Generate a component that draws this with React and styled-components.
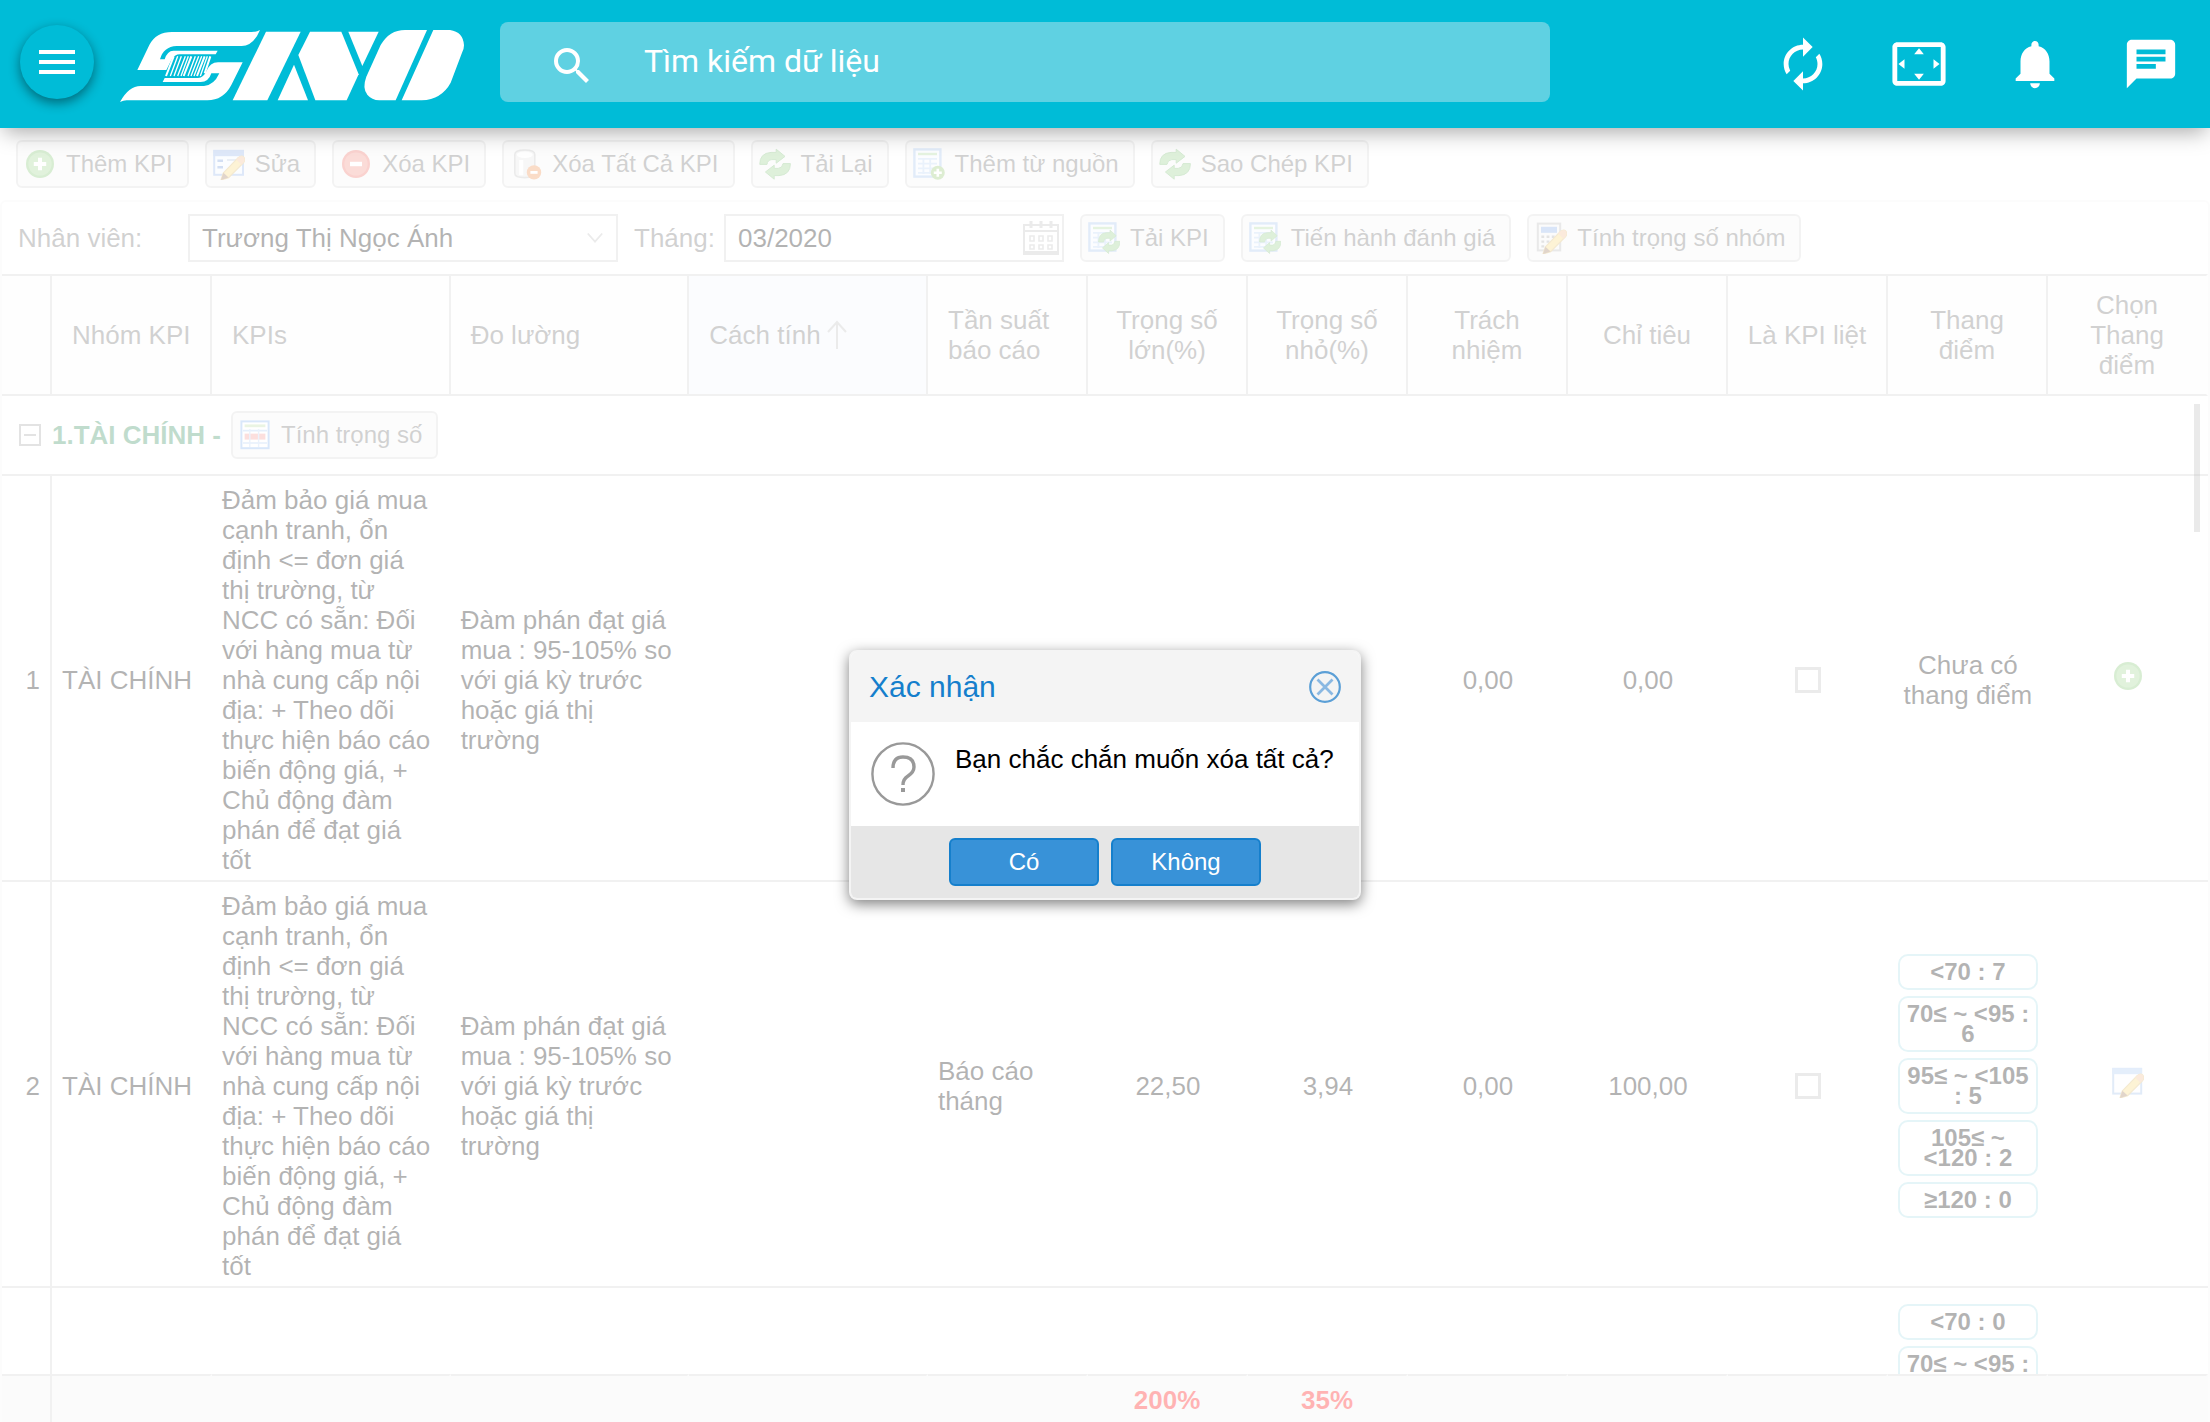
import React from "react";
import styled, { createGlobalStyle, css } from "styled-components";
import {
  MdAutorenew,
  MdChat,
  MdMenu,
  MdNotifications,
  MdSearch,
  MdSettingsOverscan,
} from "react-icons/md";

const GlobalStyle = createGlobalStyle`
  * { box-sizing: border-box; }
  body {
    margin: 0;
    background: #fff;
    color: #000;
    font-family: "Liberation Sans", Arial, sans-serif;
    font-size: 26px;
    line-height: 30px;
  }
  button, input, select { font-family: inherit; margin: 0; }
`;

const line = "#d0d0d0";

const Page = styled.div`
  position: relative;
  display: flex;
  flex-direction: column;
  height: 100vh;
  overflow: hidden;
`;

/* ---------- top bar ---------- */

const TopBar = styled.header`
  position: relative;
  z-index: 2;
  flex: none;
  display: flex;
  align-items: center;
  height: 128px;
  padding: 0 30px 0 20px;
  background: #00bcd7;
  color: #fff;
  box-shadow: 0 8px 20px -4px rgba(0, 0, 0, 0.34);
`;

const IconButton = styled.button`
  display: flex;
  padding: 0;
  border: 0;
  background: none;
  color: inherit;
  svg { display: block; }
`;

const MenuButton = styled(IconButton)`
  align-items: center;
  justify-content: center;
  width: 74px;
  height: 74px;
  margin: 0 26px 4px 0;
  border-radius: 50%;
  background: #00bcd7;
  box-shadow: 0 4px 12px rgba(0, 0, 0, 0.45);
`;

const SearchBox = styled.div`
  display: flex;
  align-items: flex-end;
  gap: 48px;
  flex: 0 1 1050px;
  height: 80px;
  margin: 0 0 4px 36px;
  padding: 12px 48px;
  border-radius: 8px;
  background: #5fd1e2;
  svg { flex: none; }
`;

const SearchInput = styled.input`
  flex: 1;
  height: 56px;
  padding: 0 0 2px;
  border: 0;
  outline: 0;
  background: none;
  color: #fff;
  font: 32px Roboto, sans-serif;
  &::placeholder { color: #fff; opacity: 1; }
`;

const TopActions = styled.nav`
  display: flex;
  gap: 58px;
  margin-left: auto;
`;

/* ---------- toolbars ---------- */

const Workspace = styled.main`
  flex: 1;
  min-height: 0;
  display: flex;
  flex-direction: column;
`;

const Toolbar = styled.div`
  flex: none;
  display: flex;
  align-items: center;
  gap: 16px;
  padding: 12px 16px;
`;

const ToolButton = styled.button`
  display: inline-flex;
  align-items: center;
  gap: 10px;
  height: 48px;
  padding: 0 14px 0 6px;
  border: 2px solid #d8d8d8;
  border-radius: 6px;
  background: #f5f5f5;
  color: #666;
  font-size: 24px;
  white-space: nowrap;
  svg { display: block; flex: none; }
`;

const Panel = styled.section`
  flex: 1;
  min-height: 0;
  display: flex;
  flex-direction: column;
  border: 2px solid #f5f5f5;
  border-bottom: 0;
  border-radius: 6px 6px 0 0;
`;

const FieldLabel = styled.label`
  width: ${(p) => (p.$wide ? "154px" : "74px")};
  color: #666;
  white-space: nowrap;
`;

const Field = styled.div`
  position: relative;
  width: ${(p) => (p.$wide ? "430px" : "340px")};
  svg {
    position: absolute;
    top: 50%;
    right: ${(p) => (p.$wide ? "14px" : "4px")};
    transform: translateY(-50%);
    pointer-events: none;
  }
`;

const control = css`
  display: block;
  width: 100%;
  height: 48px;
  padding: 0 12px;
  border: 2px solid ${line};
  border-radius: 0;
  background: #fff;
  color: #000;
  font-size: 26px;
  appearance: none;
`;
const Select = styled.select`${control}`;
const TextInput = styled.input`${control}`;

/* ---------- grid ---------- */

const Grid = styled.table`
  width: 100%;
  border-spacing: 0;
  table-layout: fixed;
`;

const HeadCell = styled.th`
  height: 122px;
  padding: ${(p) => (p.$center ? "0 12px" : "0 0 0 20px")};
  border-top: 2px solid ${line};
  border-bottom: 2px solid ${line};
  border-right: 2px solid ${line};
  background: ${(p) => (p.$sorted ? "#f0f5fb" : "#fafafa")};
  color: #666;
  font-weight: 400;
  text-align: ${(p) => (p.$center ? "center" : "left")};
  &:last-child { border-right-color: transparent; }
`;

const HeadLabel = styled.span`
  display: inline-flex;
  align-items: center;
  gap: 6px;
`;

const GridBody = styled.div`
  position: relative;
  flex: 1;
  min-height: 0;
  overflow: hidden;
`;

const Cell = styled.td`
  padding: 9px 10px 5px;
  border-bottom: 2px solid ${line};
  text-align: ${(p) => p.$align || "left"};
  vertical-align: middle;
  white-space: pre-line;
`;

const NumberCell = styled(Cell)`
  padding-left: 0;
  border-right: 2px solid ${line};
  text-align: right;
`;

const IconCell = styled(Cell)`
  padding: 5px 10px 9px;
  svg { display: block; margin: 0 auto; }
`;

const PartialCell = styled(Cell)`
  height: 298px;
  padding-top: 16px;
  vertical-align: top;
`;

const GroupCell = styled.td`
  height: 80px;
  padding: 0 16px;
  border-bottom: 2px solid ${line};
`;

const GroupBar = styled.div`
  display: flex;
  align-items: center;
  gap: 10px;
`;

const GroupName = styled.strong`
  color: #2e8b57;
`;

const Tick = styled.input`
  appearance: none;
  display: block;
  width: 26px;
  height: 26px;
  margin: 0 auto;
  border: 3px solid #bbb;
  background: #fff;
`;

const Badges = styled.ul`
  display: flex;
  flex-direction: column;
  gap: 6px;
  margin: 0;
  padding: 0;
  list-style: none;
`;

const Badge = styled.li`
  padding: 6px 4px;
  border: 2px solid #a8dde6;
  border-radius: 10px;
  font-size: 24px;
  font-weight: 700;
  line-height: 20px;
  text-align: center;
`;

const ScrollThumb = styled.div`
  position: absolute;
  top: 8px;
  right: 8px;
  width: 6px;
  height: 128px;
  background: rgba(0, 0, 0, 0.28);
`;

const SummaryCell = styled.td`
  height: 48px;
  padding: 2px 0 0;
  border-top: 2px solid ${line};
  border-right: 2px solid ${(p) => (p.$first ? line : "transparent")};
  background: #f2f2f2;
  color: #f00;
  font-weight: 700;
  text-align: center;
`;

/* ---------- dialog ---------- */

const Mask = styled.div`
  position: absolute;
  inset: 128px 0 0;
  z-index: 1;
  display: flex;
  align-items: center;
  justify-content: center;
  background: rgba(255, 255, 255, 0.7);
`;

const Dialog = styled.section`
  width: 512px;
  border: 2px solid #f4f4f4;
  border-radius: 8px;
  background: #fff;
  box-shadow: 0 4px 14px rgba(0, 0, 0, 0.5);
  overflow: hidden;
`;

const DialogHead = styled.header`
  display: flex;
  align-items: center;
  justify-content: space-between;
  height: 70px;
  padding: 0 18px;
  background: #f4f4f4;
  color: #157fcc;
`;

const DialogTitle = styled.h2`
  margin: 0;
  font-size: 30px;
  font-weight: 400;
`;

const DialogBody = styled.div`
  display: flex;
  gap: 20px;
  padding: 20px;
  svg { display: block; flex: none; }
`;

const Message = styled.p`
  margin: 0;
  line-height: 34px;
  white-space: nowrap;
`;

const DialogFoot = styled.footer`
  display: flex;
  justify-content: center;
  gap: 12px;
  padding: 12px;
  background: #e6e6e6;
`;

const Choice = styled.button`
  width: 150px;
  height: 48px;
  border: 2px solid #157fcc;
  border-radius: 6px;
  background: #3892d8;
  color: #fff;
  font-size: 24px;
`;

/* ---------- drawings ---------- */

const Logo = () => (
  <svg width="344" height="76" viewBox="30 18 1032 228" fill="#fff" role="img" aria-label="SINO">
    <path d="M82 150 118 75Q138 36 186 36H425Q440 36 450 30 430 78 395 78H200Q160 80 150 118H164Q172 92 190 92H323L317 103H210Q193 103 184 120L169 150Z" />
    <path d="M30 246Q56 198 92 198H282Q312 196 328 160H304Q296 186 272 186H158L164 174H264Q281 173 289 154 300 127 324 127H398L364 195Q340 241 292 241H50Q40 241 30 246Z" />
    <g stroke="#fff" fill="none">
      <path strokeWidth="6" d="M191 109 168 168M244 109 221 168M284 109 261 168M301 109 284 160" />
      <path strokeWidth="4" d="M203 109 181 168M214 109 192 168M226 109 203 168M235 109 213 168M256 109 234 168M266 109 243 168M275 109 252 168M292 109 271 168" />
    </g>
    <path d="M468 35H572L472 241H368Z" />
    <path d="M552 134 594 241H503Z" />
    <path d="M600 35H694L746 163 710 241H616L565 105Z" />
    <path d="M715 35H806L757 138Z" />
    <path d="M951 30H885Q838 30 812 75L769 170Q756 204 772 224 785 240 808 241H857Z" />
    <path d="M970 30H1020Q1060 36 1062 76 1062 88 1056 98L1022 188Q995 238 935 241H875Z" />
  </svg>
);

const Svg = ({ size = 32, children }) => (
  <svg width={size} height={size} viewBox="0 0 16 16" fill="none" aria-hidden="true">
    {children}
  </svg>
);

const PencilShape = () => (
  <>
    <path d="M5.2 12.4 12.6 4.8Q14.3 3.4 15.4 4.6 16.4 6 15.2 7.4L7.8 14.8 4 16Z" fill="#f7d573" stroke="#d9b562" strokeWidth=".6" />
    <path d="M12.6 4.8Q14.3 3.4 15.4 4.6 16.4 6 15.2 7.4L14.2 8.4 11.6 5.8Z" fill="#f0b98a" />
    <path d="M5.2 12.4 7.8 14.8 4 16Z" fill="#9a7350" />
  </>
);

const ArrowsShape = () => (
  <g fill="#8fcc82" stroke="#74b86c" strokeWidth=".5">
    <path d="M.4 8.2Q.3 2.6 6 2.2H8.6V.6L13 4.2 8.6 7.6V5.8H6.4Q4.2 6 4 8.2Z" />
    <path d="M15.7 7.8Q15.7 13.4 10 13.8H7.6V15.6L3.2 12 7.6 8.6V10.2H9.6Q11.8 10 12 7.8Z" />
  </g>
);

const SheetShape = () => (
  <>
    <rect x=".7" y=".7" width="13" height="13.6" fill="#f4f9ff" stroke="#9dbfec" strokeWidth="1.2" />
    <path d="M2.500 3H12" stroke="#a9d698" strokeWidth="1.2" />
    <path d="M2.500 5.4H12M2.500 7.8H12M2.500 10.2H12M2.500 12.4H12M5.2 5V13M8.6 5V13" stroke="#b9d2f3" strokeWidth=".9" />
  </>
);

const AddIcon = ({ size }) => (
  <Svg size={size}>
    <circle cx="8" cy="8" r="7" fill="#7cc46c" />
    <circle cx="8" cy="8" r="5.8" fill="#9ad48b" />
    <path d="M8 4.9V11.1M4.9 8H11.1" stroke="#fff" strokeWidth="2" />
  </Svg>
);

const RemoveIcon = () => (
  <Svg>
    <circle cx="8" cy="8" r="7" fill="#ee6a5e" />
    <circle cx="8" cy="8" r="5.8" fill="#f28a7e" />
    <path d="M5 8H11" stroke="#fff" strokeWidth="2.2" />
  </Svg>
);

const FormEditIcon = () => (
  <Svg>
    <rect x=".6" y="1.4" width="14.4" height="12" fill="#f2f7ff" stroke="#8fb3ea" />
    <path d="M.2 2.6H15.4" stroke="#8fb3ea" strokeWidth="3" />
    <path d="M2.2 6.4H5M2.2 9.6H5" stroke="#6c93d6" strokeWidth="1.2" />
    <path d="M7 6H13V8" stroke="#b8c8e0" />
    <PencilShape />
  </Svg>
);

const WindowEditIcon = () => (
  <Svg>
    <rect x=".6" y="1.4" width="14" height="12.4" fill="#fafcff" stroke="#9cbce8" />
    <path d="M.2 2.6H15" stroke="#a4c5f2" strokeWidth="3" />
    <PencilShape />
  </Svg>
);

const DatabaseIcon = () => (
  <Svg>
    <path d="M2.4 3.2Q2.4 1 7.4 1T12.4 3.2V12.6Q12.4 14.8 7.4 14.8T2.4 12.6Z" fill="#e4e4e4" stroke="#bdbdbd" strokeWidth=".8" />
    <ellipse cx="7.4" cy="3.4" rx="4" ry="1.6" fill="#fff" />
    <path d="M5.6 6V13.6" stroke="#fff" strokeWidth="2" />
    <circle cx="12" cy="12.2" r="3.6" fill="#ee8a45" />
    <path d="M10.2 12.2H13.8" stroke="#fff" strokeWidth="1.4" />
  </Svg>
);

const ReloadIcon = () => (
  <Svg>
    <ArrowsShape />
  </Svg>
);

const SheetAddIcon = () => (
  <Svg>
    <SheetShape />
    <circle cx="12.4" cy="12.4" r="3.5" fill="#8ec46a" />
    <path d="M12.4 10.4V14.4M10.4 12.4H14.4" stroke="#fff" strokeWidth="1.3" />
  </Svg>
);

const SheetReloadIcon = () => (
  <Svg>
    <SheetShape />
    <g transform="translate(5 3.6) scale(.7 .78)">
      <ArrowsShape />
    </g>
  </Svg>
);

const CalculatorIcon = () => (
  <Svg>
    <rect x="1.4" y=".8" width="11.2" height="13.4" fill="#f0f0f0" stroke="#b5b5b5" />
    <rect x="3" y="2.4" width="8" height="3" fill="#7fa9e6" />
    <path d="M3.2 7.4H11M3.2 9.8H11M3.2 12.2H11" stroke="#a0a0a0" strokeWidth="1.2" strokeDasharray="1.4 1.2" />
    <PencilShape />
  </Svg>
);

const TableIcon = () => (
  <Svg>
    <rect x="1.2" y="1.2" width="13.6" height="13.4" fill="#fff" stroke="#7fb0ee" />
    <path d="M2.8 3.4H13.2" stroke="#b9dba0" strokeWidth="1.4" />
    <path d="M2 5.8H14M2 12H14" stroke="#a9c8f0" strokeWidth=".8" />
    <path d="M2.8 8.8H13.2" stroke="#f6958e" strokeWidth="3" />
    <path d="M5.4 5V14M9.8 5V14" stroke="#bcd3f3" strokeWidth=".7" />
  </Svg>
);

const Chevron = () => (
  <svg width="18" height="14" viewBox="0 0 20 14" fill="none" stroke="#bbb" strokeWidth="2" aria-hidden="true">
    <path d="M2 2 10 11 18 2" />
  </svg>
);

const CalendarIcon = () => (
  <svg width="38" height="38" viewBox="0 0 38 38" fill="none" stroke="#bdbdbd" strokeWidth="2" aria-hidden="true">
    <rect x="2" y="6" width="34" height="29" />
    <path d="M2 12H36" />
    <path d="M2 34H36" strokeWidth="4" />
    <path d="M9 2V9M19 2V9M29 2V9" strokeWidth="3" />
    <path d="M8 17H12V22H8ZM17 17H21V22H17ZM26 17H30V22H26ZM8 26H12V30H8ZM17 26H21V30H17ZM26 26H30V30H26Z" strokeWidth="1.6" />
  </svg>
);

const SortArrow = () => (
  <svg width="20" height="30" viewBox="0 0 20 30" fill="none" stroke="#bbb" strokeWidth="2" aria-hidden="true">
    <path d="M10 29V2M1 12 10 2 19 12" />
  </svg>
);

const CollapseIcon = () => (
  <svg width="24" height="24" viewBox="0 0 24 24" fill="none" stroke="#a0a0a0" strokeWidth="2" aria-hidden="true">
    <path d="M2 2H22V22H2ZM6 12H18" />
  </svg>
);

const CloseIcon = () => (
  <svg width="32" height="32" viewBox="0 0 32 32" fill="none" stroke="#5b9fd6" strokeWidth="2.2" aria-hidden="true">
    <circle cx="16" cy="16" r="14.8" />
    <path d="M8.500 8.500 23.500 23.500M23.500 8.500 8.500 23.500" stroke="#8ab8e2" strokeWidth="2.8" />
  </svg>
);

const QuestionIcon = () => (
  <svg width="64" height="64" viewBox="0 0 64 64" fill="none" stroke="#999" strokeWidth="2.4" aria-hidden="true">
    <circle cx="32" cy="32" r="30.6" />
    <path d="M22 26Q22 15 32 15 43 15 43 25 43 30 37 34 32 37 32 43" strokeWidth="3.4" />
    <path d="M30 48H34" strokeWidth="4" />
  </svg>
);

/* ---------- data ---------- */

const actions = [
  ["Thêm KPI", AddIcon],
  ["Sửa", FormEditIcon],
  ["Xóa KPI", RemoveIcon],
  ["Xóa Tất Cả KPI", DatabaseIcon],
  ["Tải Lại", ReloadIcon],
  ["Thêm từ nguồn", SheetAddIcon],
  ["Sao Chép KPI", ReloadIcon],
];

const filterActions = [
  ["Tải KPI", SheetReloadIcon],
  ["Tiến hành đánh giá", SheetReloadIcon],
  ["Tính trọng số nhóm", CalculatorIcon],
];

const columns = [
  { label: "", width: 50 },
  { label: "Nhóm KPI", width: 160 },
  { label: "KPIs" },
  { label: "Đo lường" },
  { label: "Cách tính", sorted: true },
  { label: "Tần suất báo cáo", width: 160 },
  { label: "Trọng số lớn(%)", width: 160, center: true },
  { label: "Trọng số nhỏ(%)", width: 160, center: true },
  { label: "Trách nhiệm", width: 160, center: true },
  { label: "Chỉ tiêu", width: 160, center: true },
  { label: "Là KPI liệt", width: 160, center: true },
  { label: "Thang điểm", width: 160, center: true },
  { label: "Chọn Thang điểm", width: 160, center: true },
];

const kpiText = `Đảm bảo giá mua cạnh tranh, ổn
định <= đơn giá
thị trường, từ
NCC có sẵn: Đối với hàng mua từ
nhà cung cấp nội địa: + Theo dõi
thực hiện báo cáo biến động giá, +
Chủ động đàm phán để đạt giá
tốt`;
const measureText = "Đàm phán đạt giá mua : 95-105% so với giá kỳ trước hoặc giá thị trường";

const rows = [
  { id: 1, target: "0,00" },
  {
    id: 2,
    period: "Báo cáo tháng",
    major: "22,50",
    minor: "3,94",
    target: "100,00",
    scale: ["<70 : 7", "70≤ ~ <95 : 6", "95≤ ~ <105 : 5", "105≤ ~ <120 : 2", "≥120 : 0"],
  },
];

const partialScale = ["<70 : 0", "70≤ ~ <95 : 6"];

const Columns = () => (
  <colgroup>
    {columns.map((c, i) => (
      <col key={i} width={c.width} />
    ))}
  </colgroup>
);

const Tools = ({ items }) =>
  items.map(([label, Icon]) => (
    <ToolButton key={label} type="button">
      <Icon />
      {label}
    </ToolButton>
  ));

const Scale = ({ items }) => (
  <Badges>
    {items.map((s) => (
      <Badge key={s}>{s}</Badge>
    ))}
  </Badges>
);

export default function App() {
  return (
    <Page>
      <GlobalStyle />
      <TopBar>
        <MenuButton type="button" aria-label="Menu">
          <MdMenu size={48} />
        </MenuButton>
        <Logo />
        <SearchBox>
          <MdSearch size={48} />
          <SearchInput type="search" placeholder="Tìm kiếm dữ liệu" aria-label="Tìm kiếm dữ liệu" />
        </SearchBox>
        <TopActions>
          <IconButton type="button" aria-label="Làm mới"><MdAutorenew size={58} /></IconButton>
          <IconButton type="button" aria-label="Toàn màn hình"><MdSettingsOverscan size={58} /></IconButton>
          <IconButton type="button" aria-label="Thông báo"><MdNotifications size={58} /></IconButton>
          <IconButton type="button" aria-label="Tin nhắn"><MdChat size={58} /></IconButton>
        </TopActions>
      </TopBar>

      <Workspace>
        <Toolbar>
          <Tools items={actions} />
        </Toolbar>
        <Panel>
          <Toolbar>
            <FieldLabel htmlFor="employee" $wide>Nhân viên:</FieldLabel>
            <Field $wide>
              <Select id="employee" defaultValue="a">
                <option value="a">Trương Thị Ngọc Ánh</option>
              </Select>
              <Chevron />
            </Field>
            <FieldLabel htmlFor="month">Tháng:</FieldLabel>
            <Field>
              <TextInput id="month" type="text" defaultValue="03/2020" />
              <CalendarIcon />
            </Field>
            <Tools items={filterActions} />
          </Toolbar>

          <Grid>
            <Columns />
            <thead>
              <tr>
                {columns.map((c, i) => (
                  <HeadCell key={i} $center={c.center} $sorted={c.sorted}>
                    {c.sorted ? (
                      <HeadLabel>
                        {c.label}
                        <SortArrow />
                      </HeadLabel>
                    ) : (
                      c.label
                    )}
                  </HeadCell>
                ))}
              </tr>
            </thead>
          </Grid>

          <GridBody>
            <Grid>
              <Columns />
              <tbody>
                <tr>
                  <GroupCell colSpan={13}>
                    <GroupBar>
                      <IconButton type="button" aria-label="Thu gọn"><CollapseIcon /></IconButton>
                      <GroupName>1.TÀI CHÍNH -</GroupName>
                      <ToolButton type="button">
                        <TableIcon />
                        Tính trọng số
                      </ToolButton>
                    </GroupBar>
                  </GroupCell>
                </tr>
                {rows.map((r) => (
                  <tr key={r.id}>
                    <NumberCell>{r.id}</NumberCell>
                    <Cell>TÀI CHÍNH</Cell>
                    <Cell>{kpiText}</Cell>
                    <Cell>{measureText}</Cell>
                    <Cell />
                    <Cell>{r.period}</Cell>
                    <Cell $align="center">{r.major}</Cell>
                    <Cell $align="center">{r.minor}</Cell>
                    <Cell $align="center">0,00</Cell>
                    <Cell $align="center">{r.target}</Cell>
                    <Cell>
                      <Tick type="checkbox" aria-label={`Là KPI liệt ${r.id}`} />
                    </Cell>
                    <Cell $align="center">{r.scale ? <Scale items={r.scale} /> : "Chưa có thang điểm"}</Cell>
                    <IconCell>{r.scale ? <WindowEditIcon /> : <AddIcon />}</IconCell>
                  </tr>
                ))}
                <tr>
                  <NumberCell />
                  <Cell colSpan={10} />
                  <PartialCell>
                    <Scale items={partialScale} />
                  </PartialCell>
                  <Cell />
                </tr>
              </tbody>
            </Grid>
            <ScrollThumb />
          </GridBody>

          <Grid>
            <Columns />
            <tbody>
              <tr>
                {columns.map((c, i) => (
                  <SummaryCell key={i} $first={i === 0}>
                    {i === 6 ? "200%" : i === 7 ? "35%" : null}
                  </SummaryCell>
                ))}
              </tr>
            </tbody>
          </Grid>
        </Panel>
      </Workspace>

      <Mask>
        <Dialog role="dialog" aria-modal="true" aria-labelledby="confirm-title">
          <DialogHead>
            <DialogTitle id="confirm-title">Xác nhận</DialogTitle>
            <IconButton type="button" aria-label="Đóng"><CloseIcon /></IconButton>
          </DialogHead>
          <DialogBody>
            <QuestionIcon />
            <Message>Bạn chắc chắn muốn xóa tất cả?</Message>
          </DialogBody>
          <DialogFoot>
            <Choice type="button">Có</Choice>
            <Choice type="button">Không</Choice>
          </DialogFoot>
        </Dialog>
      </Mask>
    </Page>
  );
}
